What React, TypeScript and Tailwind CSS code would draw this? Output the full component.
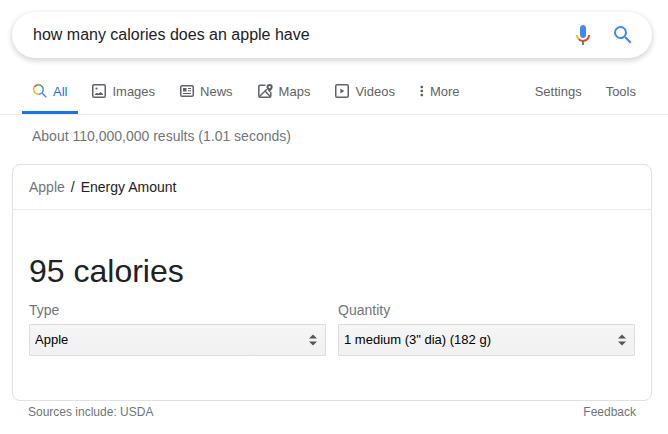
import { ReactNode, useState } from 'react';

const tabs: { label: string; icon: ReactNode }[] = [
  { label: 'All', icon: <AllIcon /> },
  { label: 'Images', icon: <ImagesIcon /> },
  { label: 'News', icon: <NewsIcon /> },
  { label: 'Maps', icon: <MapsIcon /> },
  { label: 'Videos', icon: <VideosIcon /> },
];

function AllIcon() {
  return (
    <svg width="14" height="14" viewBox="0 0 14 14" fill="none" strokeWidth="1.5" aria-hidden="true">
      <path d="M1.4 3A4.7 4.7 0 0 1 5.5 0.8" stroke="#ea4335" />
      <path d="M5.5 0.8A4.7 4.7 0 0 1 10.2 5.5" stroke="#34a853" />
      <path d="M1.4 3A4.7 4.7 0 0 0 5.5 10.2" stroke="#fbbc04" />
      <path d="M10.2 5.5A4.7 4.7 0 0 1 5.5 10.2M8.8 8.8L13.2 13.2" stroke="#4285f4" />
    </svg>
  );
}

function ImagesIcon() {
  return (
    <svg width="14" height="14" viewBox="0 0 14 14" fill="none" aria-hidden="true">
      <rect x="0.75" y="0.75" width="12.5" height="12.5" rx="1.3" stroke="currentColor" strokeWidth="1.5" />
      <circle cx="4.5" cy="4.5" r="1.1" fill="currentColor" />
      <path d="M3 11V10L5 8.8L6.4 9.6L8.6 8L11 10V11Z" fill="currentColor" />
    </svg>
  );
}

function NewsIcon() {
  return (
    <svg width="14" height="14" viewBox="0 0 14 14" fill="none" aria-hidden="true">
      <rect x="0.75" y="1.75" width="12.5" height="10.5" rx="1.3" stroke="currentColor" strokeWidth="1.5" />
      <path d="M3 4H6.5V7.5H3ZM8 4H11V5H8ZM8 6.3H11V7.3H8ZM3 9H11V10H3Z" fill="currentColor" />
    </svg>
  );
}

function MapsIcon() {
  return (
    <svg width="15" height="14" viewBox="0 0 15 14" fill="none" aria-hidden="true">
      <path d="M7.5 1.2H2Q0.8 1.2 0.8 2.4V12Q0.8 13.2 2 13.2H11.6Q12.8 13.2 12.8 12V8" stroke="currentColor" strokeWidth="1.5" />
      <path d="M1.2 12.8L8.8 5.2M7 7L12.5 12.8" stroke="currentColor" strokeWidth="1.4" />
      <path
        fillRule="evenodd"
        d="M11.6 0A3.1 3.1 0 0 0 8.5 3.1C8.5 5 11.6 8.4 11.6 8.4S14.7 5 14.7 3.1A3.1 3.1 0 0 0 11.6 0ZM11.6 2A1.1 1.1 0 1 1 11.6 4.2A1.1 1.1 0 0 1 11.6 2Z"
        fill="currentColor"
      />
    </svg>
  );
}

function VideosIcon() {
  return (
    <svg width="14" height="14" viewBox="0 0 14 14" fill="none" aria-hidden="true">
      <rect x="0.75" y="0.75" width="12.5" height="12.5" rx="1.3" stroke="currentColor" strokeWidth="1.5" />
      <path d="M5.4 4.4V9.6L9.2 7Z" fill="currentColor" />
    </svg>
  );
}

function MoreIcon() {
  return (
    <svg width="4" height="14" viewBox="0 0 4 14" fill="currentColor" aria-hidden="true">
      <rect x="0.5" y="1.7" width="2.6" height="2.6" rx="0.8" />
      <rect x="0.5" y="5.7" width="2.6" height="2.6" rx="0.8" />
      <rect x="0.5" y="9.7" width="2.6" height="2.6" rx="0.8" />
    </svg>
  );
}

function MicIcon() {
  return (
    <svg width="24" height="24" viewBox="0 0 24 24" aria-hidden="true">
      <path fill="#4285f4" d="m12 15c1.66 0 3-1.31 3-2.97v-7.02c0-1.66-1.34-3.01-3-3.01s-3 1.34-3 3.01v7.02c0 1.66 1.34 2.97 3 2.97z" />
      <path fill="#34a853" d="m11 18.08h2v3.92h-2z" />
      <path fill="#fbbc05" d="m7.05 16.87c-1.27-1.33-2.05-2.83-2.05-4.87h2c0 1.45 0.56 2.42 1.47 3.38v0.32l-1.15 1.18z" />
      <path fill="#ea4335" d="m12 16.93a4.97 5.25 0 0 1 -3.54 -1.55l-1.41 1.49c1.26 1.34 3.02 2.13 4.95 2.13 3.87 0 6.99-2.92 6.99-7h-1.99c0 2.92-2.24 4.93-5 4.93z" />
    </svg>
  );
}

function SearchIcon() {
  return (
    <svg width="24" height="24" viewBox="0 0 24 24" fill="#4285f4" aria-hidden="true">
      <path d="M15.5 14h-.79l-.28-.27A6.471 6.471 0 0 0 16 9.5 6.5 6.5 0 1 0 9.5 16c1.61 0 3.09-.59 4.23-1.57l.27.28v.79l5 4.99L20.49 19l-4.99-5zm-6 0C7.01 14 5 11.99 5 9.5S7.01 5 9.5 5 14 7.01 14 9.5 11.99 14 9.5 14z" />
    </svg>
  );
}

interface SelectFieldProps {
  id: string;
  label: string;
  options: string[];
}

function SelectField({ id, label, options }: SelectFieldProps) {
  return (
    <div className="min-w-0 flex-1">
      <label htmlFor={id} className="mb-1 block text-sm leading-5 text-[#70757a]">
        {label}
      </label>
      <div className="relative">
        <select
          id={id}
          className="block h-8 w-full appearance-none rounded-[1px] border border-[#dcdcdc] bg-linear-to-b from-[#f5f5f5] to-[#f1f1f1] pr-6 pl-[5px] text-[13px] text-black"
        >
          {options.map((option) => (
            <option key={option}>{option}</option>
          ))}
        </select>
        <svg
          width="8"
          height="12"
          viewBox="0 0 8 12"
          fill="#555"
          className="pointer-events-none absolute top-[10px] right-[9px]"
          aria-hidden="true"
        >
          <path d="M0 4.5L4 0.5L8 4.5ZM0 7.5H8L4 11.5Z" />
        </svg>
      </div>
    </div>
  );
}

export default function App() {
  const [query, setQuery] = useState('how many calories does an apple have');

  return (
    <div className="bg-white pt-3 font-['Liberation_Sans',Arial,sans-serif] text-[#202124]">
      {/* Search box */}
      <form
        role="search"
        onSubmit={(e) => e.preventDefault()}
        className="mr-4 ml-3 flex h-[46px] items-center gap-4 rounded-full bg-white pr-[17px] pl-[21px] shadow-[0_2px_5px_1px_rgba(64,60,67,0.2)]"
      >
        <input
          type="text"
          aria-label="Search"
          value={query}
          onChange={(e) => setQuery(e.target.value)}
          className="min-w-0 flex-1 text-base text-[#202124] outline-none"
        />
        <button type="button" aria-label="Search by voice">
          <MicIcon />
        </button>
        <button type="submit" aria-label="Search">
          <SearchIcon />
        </button>
      </form>

      {/* Tabs */}
      <nav className="mt-5 flex justify-between border-b border-[#ebebeb] pr-8 pl-[22px] text-[13px] leading-7 text-[#5f6368]">
        <div className="flex gap-[3px]">
          {tabs.map((tab, index) => (
            <a
              key={tab.label}
              href="#"
              className={`flex items-start gap-[6px] border-b-3 px-[11px] pb-[5px] [&>svg]:mt-[6px] ${
                index === 0 ? 'border-[#1a73e8] text-[#1a73e8]' : 'border-transparent'
              }`}
            >
              {tab.icon}
              {tab.label}
            </a>
          ))}
          <button
            type="button"
            className="flex items-start gap-[6px] border-b-3 border-transparent px-[11px] pb-[5px] [&>svg]:mt-[6px]"
          >
            <MoreIcon />
            More
          </button>
        </div>
        <div className="flex items-start gap-6">
          <button type="button">Settings</button>
          <button type="button">Tools</button>
        </div>
      </nav>

      <p className="mt-[11px] px-8 text-sm leading-5 text-[#70757a]">About 110,000,000 results (1.01 seconds)</p>

      {/* Nutrition card */}
      <main className="mt-[18px] mr-4 ml-3">
        <div className="rounded-lg border border-[#dfe1e5]">
          <div className="flex gap-[6px] border-b border-[#ebebeb] px-4 py-3 text-sm leading-5">
            <a href="#" className="text-[#70757a]">
              Apple
            </a>
            <span>/</span>
            <span>Energy Amount</span>
          </div>
          <div className="px-4 pt-[41px] pb-11">
            <h1 className="text-[32px] leading-10">95 calories</h1>
            <div className="mt-[9px] flex gap-3">
              <SelectField id="type" label="Type" options={['Apple']} />
              <SelectField id="quantity" label="Quantity" options={['1 medium (3" dia) (182 g)']} />
            </div>
          </div>
        </div>
        <div className="flex justify-between px-4 text-xs leading-[22px] text-[#70757a]">
          <span>Sources include: USDA</span>
          <a href="#">Feedback</a>
        </div>
      </main>
    </div>
  );
}
